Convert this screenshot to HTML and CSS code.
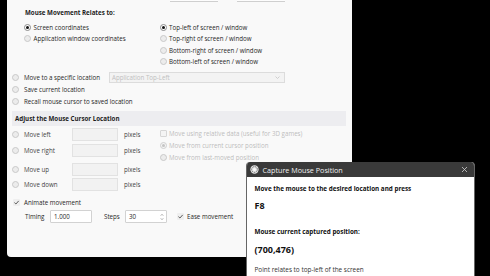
FILE: index.html
```html
<!DOCTYPE html>
<html>
<head>
<meta charset="utf-8">
<link rel="stylesheet" href="styles.css">
</head>
<body>
<div class="screen">
  <div class="panel">
    <div class="topbtns"><span class="tb"></span><span class="tb"></span></div>
    <div class="relates">
      <div class="heading">Mouse Movement Relates to:</div>
      <div class="cols">
        <div class="col c1">
          <div class="opt"><span class="radio on"></span>Screen coordinates</div>
          <div class="opt"><span class="radio"></span>Application window coordinates</div>
        </div>
        <div class="col c2">
          <div class="opt"><span class="radio on"></span>Top-left of screen / window</div>
          <div class="opt"><span class="radio"></span>Top-right of screen / window</div>
          <div class="opt"><span class="radio"></span>Bottom-right of screen / window</div>
          <div class="opt"><span class="radio"></span>Bottom-left of screen / window</div>
        </div>
      </div>
    </div>
    <div class="locs">
      <div class="lrow"><span class="radio"></span><span class="ltext">Move to a specific location</span>
        <div class="select"><span>Application Top-Left</span>
          <svg class="caret" width="5" height="3" viewBox="0 0 5 3"><path d="M0.5 0.5 L2.5 2.5 L4.5 0.5" fill="none" stroke="#c4c4c4" stroke-width="0.8"/></svg>
        </div>
      </div>
      <div class="lrow"><span class="radio"></span><span class="ltext">Save current location</span></div>
      <div class="lrow"><span class="radio"></span><span class="ltext">Recall mouse cursor to saved location</span></div>
    </div>
    <div class="band">Adjust the Mouse Cursor Location</div>
    <div class="adjust">
      <div class="moves">
        <div class="mrow m1"><span class="radio"></span><span class="mlabel">Move left</span><span class="field"></span><span class="px">pixels</span></div>
        <div class="mrow m2"><span class="radio"></span><span class="mlabel">Move right</span><span class="field"></span><span class="px">pixels</span></div>
        <div class="mrow m3"><span class="radio"></span><span class="mlabel">Move up</span><span class="field"></span><span class="px">pixels</span></div>
        <div class="mrow m4"><span class="radio"></span><span class="mlabel">Move down</span><span class="field"></span><span class="px">pixels</span></div>
      </div>
      <div class="ropts">
        <div class="opt dis"><span class="check off"></span>Move using relative data (useful for 3D games)</div>
        <div class="opt dis"><span class="radio on dim"></span>Move from current cursor position</div>
        <div class="opt dis"><span class="radio"></span>Move from last-moved position</div>
      </div>
    </div>
    <div class="anim"><span class="check"><svg width="7" height="7" viewBox="0 0 7 7"><path d="M1.4 3.6 L2.9 5 L5.7 1.9" fill="none" stroke="#333" stroke-width="0.8"/></svg></span><span class="ltext">Animate movement</span></div>
    <div class="timing">
      <span class="tlabel">Timing</span>
      <span class="tinput">1.000</span>
      <span class="slabel">Steps</span>
      <span class="tinput spin">30
        <svg class="arrows" width="4" height="8" viewBox="0 0 4 8"><path d="M0.8 2.6 L2 1.4 L3.2 2.6 M0.8 5.4 L2 6.6 L3.2 5.4" fill="none" stroke="#666" stroke-width="0.6"/></svg>
      </span>
      <span class="check ease"><svg width="7" height="7" viewBox="0 0 7 7"><path d="M1.4 3.6 L2.9 5 L5.7 1.9" fill="none" stroke="#333" stroke-width="0.8"/></svg></span>
      <span class="etext">Ease movement</span>
    </div>
  </div>

  <div class="dialog">
    <div class="titlebar">
      <svg class="ticon" width="9" height="9" viewBox="0 0 10 10">
        <circle cx="5" cy="5" r="4.6" fill="#e6e6e6"/>
        <circle cx="5" cy="5" r="3.2" fill="none" stroke="#555" stroke-width="1" stroke-dasharray="1.3 0.9"/>
        <circle cx="5" cy="5" r="1.4" fill="#fff"/>
      </svg>
      <span class="ttext">Capture Mouse Position</span>
      <svg class="close" width="7" height="7" viewBox="0 0 7 7"><path d="M1 1 L6 6 M6 1 L1 6" stroke="#d0d0d0" stroke-width="0.8"/></svg>
    </div>
    <div class="dbody">
      <div class="dl b1">Move the mouse to the desired location and press</div>
      <div class="dl big b2">F8</div>
      <div class="dl b3">Mouse current captured position:</div>
      <div class="dl big b4">(700,476)</div>
      <div class="dl norm b5">Point relates to top-left of the screen</div>
    </div>
  </div>
</div>
</body>
</html>
```

FILE: styles.css
```css
* { box-sizing: border-box; }
html, body {
  margin: 0;
  padding: 0;
  background: #000;
}
body {
  font-family: "Open Sans", "Noto Sans", sans-serif;
  font-size: 6.2px;
  color: #262626;
}
.screen {
  position: relative;
  width: 490px;
  height: 276px;
  overflow: hidden;
}
.panel {
  margin-left: 7px;
  width: 345px;
  height: 257px;
  background: #f9f9f9;
  border-radius: 0 0 3px 4px;
  display: flex;
  flex-direction: column;
}
.topbtns {
  display: flex;
  gap: 19px;
  padding-left: 163px;
  height: 2px;
}
.tb {
  width: 48px;
  height: 2px;
  background: #fdfdfd;
  border-bottom: 1px solid #cfcfcf;
}
.heading {
  margin-top: 5px;
  height: 12px;
  line-height: 12px;
  padding-left: 18px;
  font-weight: 700;
  color: #1c1c1c;
}
.cols {
  margin-top: 2.25px;
  display: flex;
}
.col { display: flex; flex-direction: column; }
.c1 { width: 152.5px; padding-left: 17px; }
.opt {
  height: 11.6px;
  display: flex;
  align-items: center;
  white-space: nowrap;
}
.radio {
  width: 7px;
  height: 7px;
  border-radius: 50%;
  background: #ececec;
  border: 0.6px solid #c9c9c9;
  flex: none;
  position: relative;
}
.opt .radio { margin-right: 2.5px; }
.radio.on {
  background: #fff;
  border-color: #8a8a8a;
}
.radio.on::after {
  content: "";
  position: absolute;
  left: 1.3px;
  top: 1.3px;
  width: 3.2px;
  height: 3.2px;
  border-radius: 50%;
  background: #111;
}
.radio.on.dim { border-color: #d0d0d0; background: #f4f4f4; }
.radio.on.dim::after { background: #c4c4c4; }
.locs {
  margin-top: 3.75px;
  padding-left: 5px;
}
.lrow {
  height: 12px;
  display: flex;
  align-items: center;
  white-space: nowrap;
}
.lrow .radio { margin-right: 5px; }
.ltext { width: 85px; }
.select {
  width: 176px;
  height: 11px;
  background: #f3f3f3;
  border: 0.6px solid #dcdcdc;
  display: flex;
  align-items: center;
  justify-content: space-between;
  padding: 0 4px 0 2px;
  color: #c0c0c0;
}
.band {
  margin: 4px 6px 0 5px;
  height: 15px;
  line-height: 15px;
  padding-left: 3px;
  background: #ededf0;
  font-weight: 700;
  color: #1c1c1c;
}
.adjust { display: flex; }
.moves {
  width: 152.5px;
  padding-left: 5px;
  display: flex;
  flex-direction: column;
}
.mrow {
  height: 13px;
  display: flex;
  align-items: center;
  white-space: nowrap;
}
.m1 { margin-top: 2px; }
.m2 { margin-top: 2.5px; }
.m3 { margin-top: 6px; }
.m4 { margin-top: 2px; }
.mrow .radio { margin-right: 5px; }
.mlabel { width: 48px; color: #444; }
.field {
  width: 46px;
  height: 13px;
  background: #f2f2f2;
  border: 0.6px solid #e2e2e2;
}
.px { margin-left: 6px; color: #444; }
.ropts {
  margin-top: 1px;
  display: flex;
  flex-direction: column;
}
.ropts .opt { height: 12px; }
.dis { color: #bdbdbd; }
.check {
  width: 7px;
  height: 7px;
  flex: none;
  background: #efefef;
  border-radius: 1px;
  display: flex;
}
.check.off {
  background: #f4f4f4;
  border: 0.6px solid #d6d6d6;
  margin-right: 2.5px;
}
.anim {
  margin-top: 5.5px;
  height: 12px;
  padding-left: 5.5px;
  display: flex;
  align-items: center;
  white-space: nowrap;
}
.anim .check { margin-right: 4.5px; }
.timing {
  margin-top: 2px;
  height: 13px;
  padding-left: 18px;
  display: flex;
  align-items: center;
  white-space: nowrap;
}
.tlabel { width: 25px; }
.tinput {
  width: 42px;
  height: 13px;
  background: #fff;
  border: 0.6px solid #d2d2d2;
  border-radius: 1px;
  padding-left: 3px;
  display: flex;
  align-items: center;
  justify-content: space-between;
}
.slabel { margin-left: 12px; width: 21px; }
.spin { padding-right: 2.5px; }
.check.ease { margin-left: 10px; margin-right: 3px; }
.dialog {
  position: absolute;
  left: 246px;
  top: 162px;
  width: 229px;
  height: 114px;
  background: #fff;
  border-left: 0.8px solid #666;
  border-right: 0.8px solid #666;
  border-radius: 4px 4px 0 0;
  overflow: hidden;
  font-size: 6.3px;
}
.titlebar {
  height: 15px;
  background: #3a3a3a;
  display: flex;
  align-items: center;
  padding-left: 2.5px;
  color: #f0f0f0;
}
.ticon { flex: none; }
.ttext { margin-left: 4px; flex: 1; font-size: 7.2px; }
.close { margin-right: 6px; }
.dbody {
  padding-left: 7.5px;
  padding-top: 6px;
  display: flex;
  flex-direction: column;
}
.dl {
  height: 12px;
  line-height: 12px;
  font-weight: 700;
  color: #111;
  white-space: nowrap;
}
.big { font-size: 9px; }
.b2 { margin-top: 5px; }
.b3 { margin-top: 14px; }
.b4 { margin-top: 6px; }
.b5 { margin-top: 8px; }
.norm { font-weight: 400; color: #333; font-size: 6.4px; }
```
